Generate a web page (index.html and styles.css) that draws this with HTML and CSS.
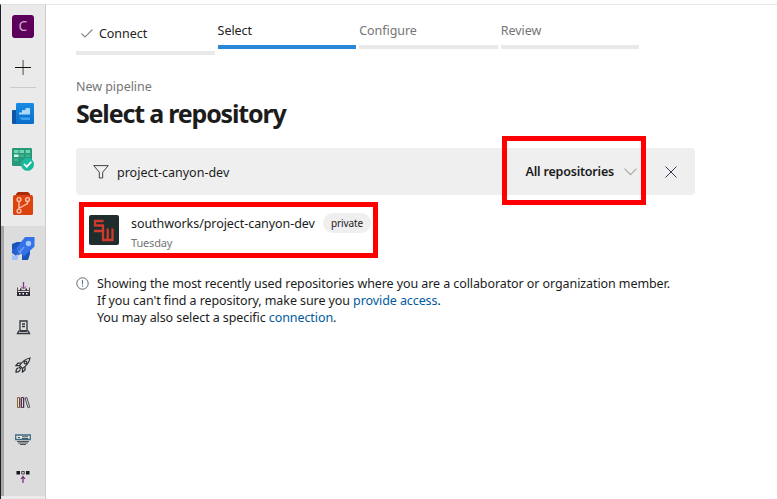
FILE: index.html
```
<!DOCTYPE html>
<html lang="en">
<head>
<meta charset="utf-8">
<title>New pipeline</title>
<link rel="stylesheet" href="styles.css">
</head>
<body>
<div class="app">
  <nav class="sidebar">
    <div class="item org"><span class="org-badge">C</span></div>
    <div class="item add"><svg width="16" height="16" viewBox="0 0 16 16"><path d="M0 8.500H16" stroke="#111" fill="none"/><path d="M7.500 1V16" stroke="#d99a57"/><path d="M8.500 1V16" stroke="#5b9fc8"/><path d="M1 8.500H15" stroke="#111"/></svg></div>
    <div class="divider"></div>
    <div class="item">
      <svg width="22" height="22" viewBox="0 0 22 22"><defs><linearGradient id="a" x2="0" y2="1"><stop stop-color="#188be4"/><stop offset="1" stop-color="#0b6dcb"/></linearGradient></defs><path d="M0 8q0-1 1-1h5v14H1q-1 0-1-1z" fill="#0b57a4"/><rect x="4" y="0" width="18" height="21" rx="1.200" fill="url(#a)"/><path d="M7 11.500V9.500h3V7h3.500V5H18v6.500z" fill="#a9d9fa"/><path d="M7 14.500h11v2.500H10z" fill="#3ca3ee"/></svg>
    </div>
    <div class="item">
      <svg width="23" height="24" viewBox="0 0 23 24"><rect y="1" width="20" height="18" rx="1.200" fill="#279878"/><path d="M2 3h4.500v3H2zM7.500 3H12v3H7.500zM13.500 3H18v3h-4.500z" fill="#6fd6b0"/><path d="M2 7.500h4.500v2.500H2z" fill="#d2ffed"/><path d="M7.500 7.500H12v2.500H7.500zM13.500 7.500H18v2.500h-4.500zM2 11.500h4.500v2.500H2z" fill="#3ab38f"/><circle cx="15.500" cy="17.300" r="6.500" fill="#18b99d"/><path d="M12 17l2.700 2.700 4.600-4.900" fill="none" stroke="#fff" stroke-width="1.700"/></svg>
    </div>
    <div class="item">
      <svg width="20" height="23" viewBox="0 0 20 23"><path d="M3 2l2-2h10l2 2v3H3z" fill="#a92b08"/><path d="M1 3h18l1 1.500V21.500q0 1.500-1.500 1.500h-17Q0 23 0 21.500v-17z" fill="#dc430f"/><g fill="none" stroke="#ffc4aa" stroke-width="1.400"><circle cx="6" cy="7.500" r="1.900"/><circle cx="14.500" cy="7.500" r="1.900"/><circle cx="6" cy="19" r="1.900"/><path d="M6 9.500V17M14.500 9.500v2L6.500 16"/></g></svg>
    </div>
    <div class="pipelines">
      <div class="item rocket">
        <svg width="23" height="23" viewBox="0 0 23 23"><path d="M0 7l5-2h7L6 13H0z" fill="#1753b8"/><path d="M10 23v-6l8-6v6l-2 6z" fill="#1753b8"/><path d="M13 0h9.500v9.500L12 19.500l-8-8z" fill="#3472e8"/><path d="M4 11.500L0 12v4l4 3 5-2z" fill="#2860cf"/><path d="M12 10L7 16" stroke="#72a1ff" stroke-width="1.500"/><circle cx="16.500" cy="6.500" r="2.700" fill="#a5c7ff"/><path d="M0 17.500l2.500 2L6 17v4.500l-1 1.500H0z" fill="#9dc0fb"/></svg>
      </div>
      <div class="sub"><svg width="15" height="15" viewBox="0 0 15 15"><path d="M7.500 0v6" stroke="#86318b" stroke-width="1.300"/><path d="M5 4.500l2.500 2.500L10 4.500" fill="none" stroke="#86318b"/><path d="M1.500 5.500V13h12V5.500M1.500 8.500h12" fill="none" stroke="#594f50"/><path d="M1 10h13v4H1z" fill="#292936"/><path d="M3 11h1.500v1.500H3zM6.500 11H8v1.500H6.500zM10 11h1.500v1.500H10z" fill="#fff"/><path d="M4 7.500h1.500M9.500 7.500H11" stroke="#222" stroke-width="2"/></svg></div>
      <div class="sub"><svg width="15" height="15" viewBox="0 0 15 15"><g fill="none" stroke="#30363d" stroke-width="1.300"><path d="M4 1h7v10H4zM6 4h3M6 6.500h3"/><path d="M3 10.500L1.500 13.500h12L12 10.500M4 11h7"/></g></svg></div>
      <div class="sub"><svg width="16" height="16" viewBox="0 0 16 16"><g fill="none" stroke="#2c3136" stroke-width="1.250"><path d="M4.500 8.500Q9 2 15 1q-1 6-7.500 10.500z"/><circle cx="10.500" cy="5.500" r="1.400"/><path d="M6 6H3L1 8.500h3.500M10 10v3L7.500 15v-3.500M4 10l2 2M3.500 11Q1 11 1 15q4 0 4-2.500"/></g></svg></div>
      <div class="sub"><svg width="15" height="14" viewBox="0 0 15 14"><g fill="none"><path d="M1.500 2.500h2v10h-2z" stroke="#8a6535"/><path d="M5.500 2.500h2v10h-2z" stroke="#6d2060"/><path d="M9 3l1.800-.6 3 9.800-1.800.6z" stroke="#4b515a"/><path d="M4 2.500v10.500M7.800 2.500v10.500" stroke="#333" stroke-width=".8"/></g></svg></div>
      <div class="sub"><svg width="16" height="12" viewBox="0 0 16 12"><g fill="none" stroke="#4c5358"><path d="M.7 1h14.600v4.500H.7z" fill="#e8e8e8" stroke="#3b6c86" stroke-width="1.300"/><path d="M3 3.500h2M7 2.800h6M7 4.500h6M2 7.500h12M3 9h10M5 10.500h6" stroke-width="1.100"/></g></svg></div>
      <div class="sub"><svg width="14" height="14" viewBox="0 0 14 14"><path d="M.5 1h3.500v3.500H.5zM10 1h3.500v3.500H10z" fill="#17171d"/><path d="M5.700 1.500h2.600V4H5.700z" fill="none" stroke="#444"/><path d="M7 13V7M5 9l2-2.500L9 9" fill="none" stroke="#77267e" stroke-width="1.200"/></svg></div>
    </div>
  </nav>
  <main class="main">
    <div class="steps">
      <div class="step done"><span class="label"><svg width="12" height="9" viewBox="0 0 12 9"><path d="M.5 4.500l3.500 3.500L11.500.5" fill="none" stroke="#858585" stroke-width="1.100"/></svg><span>Connect</span></span></div>
      <div class="step current"><span class="label">Select</span></div>
      <div class="step"><span class="label">Configure</span></div>
      <div class="step"><span class="label">Review</span></div>
    </div>
    <div class="eyebrow">New pipeline</div>
    <h1>Select a repository</h1>
    <div class="search">
      <svg width="16" height="14" viewBox="0 0 16 14"><path d="M.7.6h14.600L9.700 7.200V13H6.300V7.200z" fill="none" stroke="#3e4247" stroke-width="1"/></svg>
      <span class="query">project-canyon-dev</span>
      <span class="filter">
        <span class="filter-text">All repositories</span>
        <svg width="13" height="8" viewBox="0 0 13 8"><path d="M.5.700l6 6 6-6" fill="none" stroke="#aaa69f" stroke-width="1.100"/></svg>
        <span class="mark mark-filter"></span>
      </span>
      <svg width="12" height="12" viewBox="0 0 12 12"><path d="M.5.500l11 11M11.500.500l-11 11" fill="none" stroke="#333a50" stroke-width="1"/></svg>
    </div>
    <div class="repo">
      <svg class="avatar" width="30" height="30" viewBox="0 0 30 30"><rect width="30" height="30" rx="2" fill="#1f2d2d"/><g fill="none" stroke="#cf3a2c" stroke-width="2.300"><path d="M14.500 6H6v4.500h8V16H5"/><path d="M14 13.500V25h9.500V13.500M18.700 13.500V25"/></g></svg>
      <div class="repo-text">
        <div class="repo-line"><span class="repo-name">southworks/project-canyon-dev</span><span class="pill">private</span></div>
        <div class="when">Tuesday</div>
      </div>
      <span class="mark mark-repo"></span>
    </div>
    <div class="info">
      <svg width="13" height="13" viewBox="0 0 13 13"><circle cx="6.500" cy="6.500" r="5.700" fill="none" stroke="#666" stroke-width="1"/><path d="M6.500 3v4.500M6.500 8.500v1.300" stroke="#597c91" stroke-width="1.100"/></svg>
      <div class="info-text">
        <div>Showing the most recently used repositories where you are a collaborator or organization member.</div>
        <div>If you can't find a repository, make sure you <a>provide access</a>.</div>
        <div>You may also select a specific <a>connection</a>.</div>
      </div>
    </div>
  </main>
</div>
</body>
</html>
```
FILE: styles.css
```
* { box-sizing: border-box; }
body {
  margin: 0;
  background: #fff;
  color: #1c1c1c;
  font: 12.5px/17px "Noto Sans", "Open Sans", sans-serif;
  overflow: hidden;
}
svg { display: block; flex: none; }
.app { display: flex; height: 499px; border-top: 4px solid #fff; }
.sidebar {
  width: 46px;
  flex: none;
  background: #eaeaea;
  border-left: 1px solid #1c1c2b;
  border-right: 1px solid #ccc;
  border-top: 1px solid #e0e0e0;
}
.item { height: 45px; display: flex; align-items: center; justify-content: center; }
.org { height: 43px; }
.add { height: 39px; padding-bottom: 2px; }
.divider { width: 26px; height: 1px; margin: 0 auto 3px; background: #cbcbcb; }
.org-badge {
  width: 22px; height: 23px; border-radius: 3px;
  background: #5c005c; color: #d0aed0;
  font-size: 14px; line-height: 22px; text-align: center;
}
.pipelines { background: #dcdcdc; border-left: 3px solid #a6a6a6; padding-right: 3px; height: 270px; }
.sub { height: 37.5px; display: flex; align-items: center; justify-content: center; }
.main { flex: 1; padding: 17px 0 0 30px; border-top: 1px solid #e6e6e6; white-space: nowrap; }
.steps { display: grid; grid-template-columns: repeat(4, 138.6px); gap: 3px; align-items: start; }
.step { height: 27px; border-bottom: 4px solid #e9e9e9; color: #757575; }
.step.done { height: 33px; padding: 3px 0 0 5px; color: #222; }
.step.current { border-color: #2b88d8; color: #222; }
.label { display: flex; align-items: center; gap: 6px; letter-spacing: -0.05px; }
.eyebrow { color: #757575; margin-top: 23px; letter-spacing: -0.05px; }
h1 { margin: 1px 0 0; font-size: 25px; line-height: 34px; font-weight: 700; letter-spacing: -1.17px; }
.search {
  width: 619px; height: 47px; margin-top: 18px; padding: 0 18px 0 17px;
  display: flex; align-items: center; background: #efefef; border-radius: 4px;
}
.query { margin-left: 8px; margin-top: 1px; }
.filter { position: relative; display: flex; align-items: center; gap: 10px; margin-left: auto; margin-right: 28px; }
.filter-text { font-weight: 600; letter-spacing: -0.2px; }
.mark { position: absolute; border: 5px solid #f00; }
.mark-filter { width: 144px; height: 69px; right: -9px; top: -27px; }
.repo { position: relative; width: 299px; height: 56px; margin: 7px 0 0 3px; padding: 13px 0 0 10px; display: flex; gap: 12px; }
.mark-repo { inset: 0; }
.repo-line { display: flex; align-items: center; height: 20px; margin-top: -2px; }
.repo-name { width: 192px; letter-spacing: -0.06px; }
.pill { width: 48px; height: 20px; border-radius: 10px; background: #efefef; font-size: 10px; line-height: 20px; text-align: center; letter-spacing: -0.1px; }
.when { color: #757575; font-size: 11px; margin-top: 1px; letter-spacing: -0.15px; }
.info { display: flex; gap: 8px; margin-top: 17px; }
.info svg { margin-top: 2px; }
.info-text { letter-spacing: -0.085px; }
.info a { color: #005a9e; }
```
